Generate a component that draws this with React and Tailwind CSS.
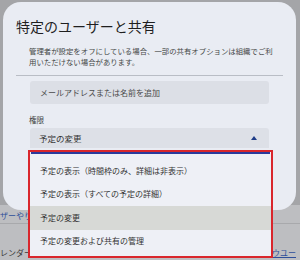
export default function App() {
  const items = [
    "予定の表示（時間枠のみ、詳細は非表示）",
    "予定の表示（すべての予定の詳細）",
    "予定の変更",
    "予定の変更および共有の管理",
  ];
  return (
    <div
      className="relative w-[300px] h-[260px] overflow-hidden bg-[#a4a5a8]"
      style={{ fontFamily: '"Noto Sans CJK JP", "Noto Sans", sans-serif' }}
    >
      {/* background page under the scrim */}
      <div className="absolute left-0 right-0 top-[205px] bottom-0 bg-[#bdbec1]">
        <div className="absolute left-0 top-[5px] text-[8px] leading-[12px] text-[#2f4f9a]">ザーやり</div>
        <div className="absolute left-0 right-0 top-[18px] h-px bg-[#a8a9ac]" />
        <div className="absolute left-0 top-[42px] text-[8px] leading-[12px] text-[#3a3a3a]">レンダー</div>
        <div className="absolute left-[272px] top-[42px] text-[8px] leading-[12px] text-[#2f4f9a] underline">ウユーザー</div>
      </div>

      {/* dialog */}
      <div className="absolute left-[3px] top-[2px] w-[293px] h-[208px] rounded-[18px] bg-[#e9ecf3] flex flex-col">
        <div className="pl-[13px] pt-[14px] text-[14px] leading-[20px] text-[#1f1f1f]">特定のユーザーと共有</div>
        <div className="pl-[26px] pt-[10px] text-[7.4px] leading-[10.5px] text-[#444746]">
          管理者が設定をオフにしている場合、一部の共有オプションは組織でご利
          <br />
          用いただけない場合があります。
        </div>
        <div className="mx-[13px] mt-[8px] h-px bg-[#b9bdc5]" />
        <div className="mx-[27px] mt-[5px] h-[23px] rounded-[3px] bg-[#dcdfe6] flex items-center pl-[10px] text-[8px] text-[#4a4a4a]">
          メールアドレスまたは名前を追加
        </div>
        <div className="pl-[26px] mt-[10px] text-[7.6px] leading-[11px] text-[#444746]">権限</div>
        <div className="mx-[27px] mt-[3px] h-[20px] rounded-t-[3px] bg-[#dde0e7] flex items-center justify-between pl-[9px] pr-[12px] text-[8.5px] text-[#333]">
          <span>予定の変更</span>
          <svg width="6" height="4" viewBox="0 0 6 4">
            <polygon points="0,4 6,4 3,0" fill="#1f3c88" />
          </svg>
        </div>
      </div>

      {/* dropdown menu */}
      <div className="absolute left-[28px] top-[150px] w-[245px] h-[108px] border-2 border-[#d9262c] bg-[#eef0f6] flex flex-col">
        <div className="mx-px h-[2px] bg-[#2b3a9c]" />
        <div className="pt-[5px] flex flex-col">
          {items.map((t, i) => (
            <div
              key={i}
              className={
                "h-[23.5px] flex items-center pl-[10px] text-[8px] text-[#333] " +
                (i === 2 ? "bg-[#d7d9d6]" : "")
              }
            >
              {t}
            </div>
          ))}
        </div>
      </div>
    </div>
  );
}
